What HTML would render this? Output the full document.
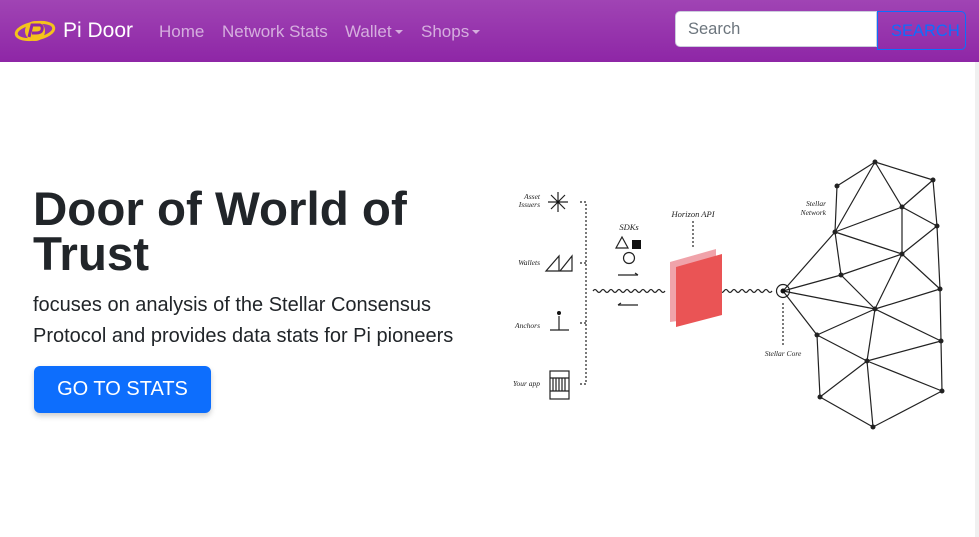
<!DOCTYPE html>
<html><head><meta charset="utf-8"><style>
*{margin:0;padding:0;box-sizing:border-box}
body{width:979px;height:537px;overflow:hidden;background:#fff;font-family:"Liberation Sans",sans-serif;position:relative}
.nav{position:absolute;left:0;top:0;width:979px;height:62px;background:linear-gradient(#a044b4,#8e26a6)}
.nav .brand{position:absolute;left:63px;top:19px;color:#fff;font-size:21px}
.nav a{position:absolute;top:22px;color:rgba(255,255,255,.6);font-size:17px}
.search{position:absolute;left:675px;top:11px;width:202px;height:36px;background:#fff;border:1px solid #ccd;border-radius:5px 0 0 5px;color:#6c757d;font-size:16.5px;padding:8px 12px}
.sbtn{position:absolute;left:877px;top:11px;width:89px;height:39px;border:1px solid #0d6efd;border-radius:0 5px 5px 0;color:#0d6efd;font-size:16.5px;padding:10px 0 0 13px;background:transparent}
h1{position:absolute;left:33px;top:187px;font-size:47.5px;line-height:45px;color:#212529;font-weight:bold}
p{position:absolute;left:33px;top:290px;font-size:20px;line-height:31px;color:#212529;width:470px}
.btn{position:absolute;left:34px;top:366px;width:177px;height:47px;background:#0d6efd;border-radius:6px;color:#fff;font-size:20px;text-align:center;line-height:47px;box-shadow:0 3px 6px rgba(0,0,0,.2)}
.car{display:inline-block;width:0;height:0;border-left:4px solid transparent;border-right:4px solid transparent;border-top:4px solid rgba(255,255,255,.6);vertical-align:3px;margin-left:3px}
</style></head><body>
<div class="nav">
<svg style="position:absolute;left:14px;top:17px" width="42" height="28" viewBox="0 0 42 28"><ellipse cx="21" cy="14" rx="19" ry="8" fill="none" stroke="#f4c21a" stroke-width="3" transform="rotate(-10 21 14)"/><circle cx="21" cy="14" r="10" fill="#f4c21a"/><path d="M15 20 L18 8 L26 8 Q29 9 28 13 Q27 16 22 16 L18 16" fill="none" stroke="#8e26a6" stroke-width="3"/></svg>
<div class="brand">Pi Door</div>
<a style="left:159px">Home</a>
<a style="left:222px">Network Stats</a>
<a style="left:345px">Wallet<span class="car"></span></a>
<a style="left:421px">Shops<span class="car"></span></a>
<div class="search">Search</div>
<div class="sbtn">SEARCH</div>
</div>
<h1>Door of World of<br>Trust</h1>
<p>focuses on analysis of the Stellar Consensus<br>Protocol and provides data stats for Pi pioneers</p>
<div class="btn">GO TO STATS</div>
<div style="position:absolute;left:975px;top:62px;width:4px;height:475px;background:#f0f0f0"></div>
<svg style="position:absolute;left:0;top:0" width="979" height="537" viewBox="0 0 979 537" font-family="Liberation Serif,serif" font-style="italic" font-size="7.5" fill="#222">
<g stroke="#222" stroke-width="1.2" fill="none">
<path d="M580 202H586V384H580M580 263H586M580 323H586" stroke-dasharray="2 2"/>
<path d="M558 192V212M548 202H568M551 195L565 209M565 195L551 209"/>
<path d="M546 271L559 256V271ZM560 271L572 256V271Z"/>
<path d="M550 330H569M559 316V330"/>
<rect x="550" y="371" width="19" height="28"/>
<path d="M550 378H569M550 391H569M553 378V391M556 378V391M559 378V391M562 378V391M565 378V391"/>
<path d="M616 248L622 237L628 248Z"/>
<circle cx="629" cy="258" r="5.5"/>
<path d="M618 275H638M635 273L638 275M618 305H638M621 303L618 305"/>
<path d="M593 291q2-3 4 0t4 0t4 0t4 0t4 0t4 0t4 0t4 0t4 0t4 0t4 0t4 0t4 0t4 0t4 0t4 0t4 0t4 0"/>
<path d="M700 291q2-3 4 0t4 0t4 0t4 0t4 0t4 0t4 0t4 0t4 0t4 0t4 0t4 0t4 0t4 0t4 0t4 0t4 0t4 0"/>
<path d="M693 221V248M783 303V345" stroke-dasharray="2 2"/>
<circle cx="783" cy="291" r="6.5"/>
<path d="M875 162L837 186M875 162L933 180M875 162L902 207M875 162L835 232M837 186L835 232M933 180L902 207M933 180L937 226M902 207L937 226M902 207L835 232M902 207L902 254M835 232L902 254M937 226L902 254M835 232L783 291M835 232L841 275M841 275L783 291M841 275L875 309M841 275L902 254M902 254L875 309M902 254L940 289M937 226L940 289M783 291L875 309M783 291L817 335M875 309L940 289M875 309L817 335M875 309L941 341M940 289L941 341M875 309L867 361M817 335L867 361M817 335L820 397M867 361L941 341M867 361L942 391M941 341L942 391M820 397L867 361M820 397L873 427M867 361L873 427M942 391L873 427"/>
</g>
<rect x="632" y="240" width="9" height="9" fill="#111"/>
<circle cx="559" cy="313" r="2" fill="#111"/>
<circle cx="558" cy="202" r="1.5" fill="#111"/>
<path d="M670 262L716 249V316L670 322Z" fill="#f0a3aa"/>
<path d="M676 267L722 254V315L676 327Z" fill="#ea5455"/>
<circle cx="783" cy="291" r="2.5" fill="#111"/>
<g fill="#222"><circle cx="875" cy="162" r="2.5"/><circle cx="837" cy="186" r="2.5"/><circle cx="933" cy="180" r="2.5"/><circle cx="902" cy="207" r="2.5"/><circle cx="937" cy="226" r="2.5"/><circle cx="835" cy="232" r="2.5"/><circle cx="902" cy="254" r="2.5"/><circle cx="841" cy="275" r="2.5"/><circle cx="940" cy="289" r="2.5"/><circle cx="875" cy="309" r="2.5"/><circle cx="817" cy="335" r="2.5"/><circle cx="941" cy="341" r="2.5"/><circle cx="867" cy="361" r="2.5"/><circle cx="820" cy="397" r="2.5"/><circle cx="942" cy="391" r="2.5"/><circle cx="873" cy="427" r="2.5"/></g>
<text x="540" y="199" text-anchor="end">Asset</text><text x="540" y="207" text-anchor="end">Issuers</text>
<text x="540" y="265" text-anchor="end">Wallets</text>
<text x="540" y="328" text-anchor="end">Anchors</text>
<text x="540" y="386" text-anchor="end">Your app</text>
<text x="629" y="230" text-anchor="middle" font-size="8.5">SDKs</text>
<text x="693" y="217" text-anchor="middle" font-size="8.5">Horizon API</text>
<text x="783" y="356" text-anchor="middle">Stellar Core</text>
<text x="826" y="206" text-anchor="end">Stellar</text><text x="826" y="215" text-anchor="end">Network</text>
</svg>
</body></html>
